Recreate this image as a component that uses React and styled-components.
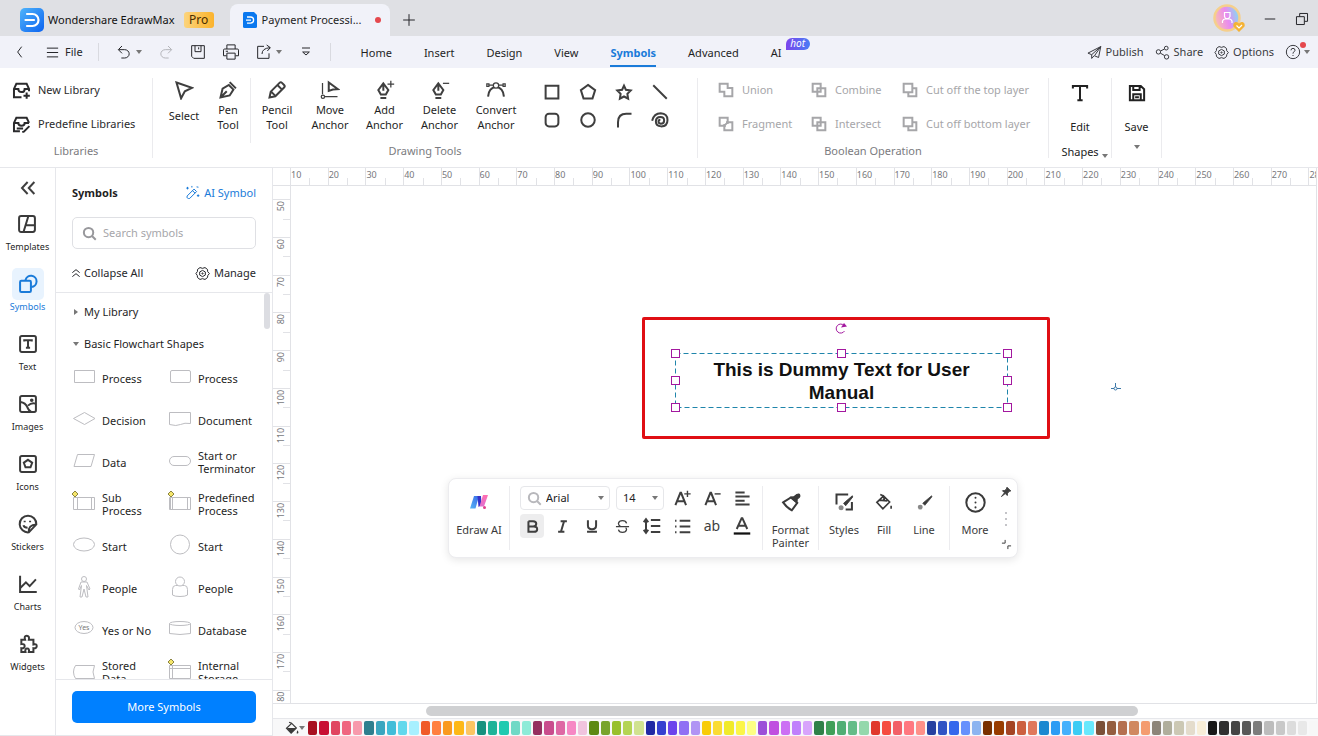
import styled, { createGlobalStyle, css } from "styled-components";

const GlobalStyle = createGlobalStyle`
  * {
    box-sizing: border-box;
  }
  body {
    margin: 0;
    background: #fff;
    color: #1f1f1f;
    font-family: "Noto Sans", "Open Sans", sans-serif;
    font-size: 11px;
    line-height: 16px;
    overflow: hidden;
  }
  button, input, select {
    font: inherit;
    color: inherit;
    margin: 0;
    padding: 0;
    border: 0;
    background: none;
  }
  svg {
    display: block;
    flex: none;
  }
  a {
    color: inherit;
    text-decoration: none;
  }
`;

/* ---------- icons ---------- */

const paths = {
  back: <path d="M14.5 4l-6 8 6 8" />,
  menu: <path d="M3 5h18M3 12h18M3 19h18" />,
  undo: <path d="M9 3L3.500 8.500 9 14M4 8.500h9a6.500 6 0 010 12.500H8" />,
  redo: <path d="M15 3l5.500 5.500L15 14M20 8.500h-9a6.500 6 0 000 12.500h5" />,
  disk: <path d="M2.500 2.500h19v19H5.500l-3-3zM7.500 2.500v9h9v-9M13 5v3" />,
  print: <path d="M6.500 8V2.500h11V8M6 17H2V9.500Q2 8 3.500 8h17Q22 8 22 9.500V17h-4M6.500 13.500h11v8h-11zM5 11h3" />,
  exportIcon: <path d="M12 3.500H2.500v18h17V14M9 15q0-8.500 12-9.500M16 1.500l5.500 4L17 10.500" />,
  overflow: <path d="M6 6h12M7 12l5 4.500 5-4.500z" />,
  plane: <path d="M22 2.500L1.500 13l6 2.500v6l4-4.500 7 3zM22 2.500L7.500 15.500M22 2.500l-9.500 14" />,
  share: (
    <>
      <circle cx="5.500" cy="11" r="3.500" />
      <circle cx="18" cy="5" r="3" />
      <circle cx="18.500" cy="19" r="3.500" />
      <path d="M9 9.500L15 6.500M8.500 13l7 4" />
    </>
  ),
  gear: (
    <>
      <path d="M8 2.500q4 2.500 8 0l4 3q-1 4 3 6.500-3.500 3-3 6.500l-4 3q-4-2.500-8 0l-4-3Q4.500 15 1.500 12q3.500-3 2.500-6.500z" />
      <path d="M12 7l4.500 2.500v5L12 17l-4.500-2.500v-5z" />
      <circle cx="12" cy="12" r="1" />
    </>
  ),
  help: (
    <>
      <circle cx="12" cy="12" r="10" />
      <path d="M9 9.500q0-3 3-3t3 3q0 1.500-3 3.500v1.500M12 16.500V18" />
    </>
  ),
  newLib: <path d="M12 20.500H2.500V10L5.500 3.500h13L21.500 10v3M2.500 10H8q0 4 4 4t4-4h5.500M18.500 14.500v8M14.500 18.500h8" />,
  preLib: <path d="M10 20.500H2.500V10L5.500 3.500h13L21.500 10M2.500 10H8q0 3.500 4 3.500t4-3.500h5.500M6 17h8M13 21.500l2-.5 7-7" />,
  select: <path d="M3 3l18.500 6.500-8.500 4-4.500 8.500z" />,
  pen: <path d="M3 21l2.500-10.500L13 6l5.500 5.500L14 18.500zM3 21l7.500-7.500M14 2.500l7.500 7.500" />,
  pencil: <path d="M3 21l1.500-7L15 3.500q1.500-1.500 3 0l2.500 2.500q1.500 1.500 0 3L10 19.500zM12.500 6l5.500 5.500M5 14l5 5" />,
  moveAnchor: (
    <>
      <path d="M10.500 13V3L21.500 11l-6 .5z" />
      <path strokeWidth="1.500" d="M3 3.500V17M6 20h15" />
      <circle cx="3.500" cy="20" r="2" strokeWidth="1.500" />
    </>
  ),
  addAnchor: (
    <>
      <path d="M10 4L4 12l3 5.500h6l3-5.500zM10 6v7M6.500 21.500h7" />
      <path strokeWidth="1.500" d="M19 1v8M15 5h8" />
    </>
  ),
  delAnchor: (
    <>
      <path d="M10 4L4 12l3 5.500h6l3-5.500zM10 6v7M6.500 21.500h7" />
      <path strokeWidth="1.500" d="M15.500 4H23" />
    </>
  ),
  convert: (
    <>
      <path d="M2.500 20Q3 9.500 12 8q9 1.500 9.500 12" />
      <path strokeWidth="1.500" fill="#fff" d="M1 4.500h2.500v3H1zM20.500 4.500H23v3h-2.500zM4 6h5M15 6h5" />
      <circle cx="12" cy="6.500" r="3.200" fill="#fff" strokeWidth="1.500" />
    </>
  ),
  square: <path d="M3.500 3.500h17v17h-17z" />,
  pentagon: <path d="M12 2.500l9.500 7L18 20.500H6L2.500 9.500z" />,
  star: <path d="M12 3.500l2.500 5.500 6.500 1-4.500 4.500 1 6.500-5.500-3-5.500 3 1-6.500L3 10l6.500-1z" />,
  line: <path d="M3 3l18 18" />,
  rounded: <rect x="3.500" y="3.500" width="17" height="17" rx="4.500" />,
  circle: <circle cx="12" cy="12" r="9" />,
  arc: <path d="M4 22V15Q4 3.500 15 3.500h7" />,
  spiral: <path d="M1.500 13Q4 3 13 3q9 .5 9 9t-8.500 8.500q-7-.5-7-6.500t6-6q5 0 5 4.500t-4.500 4.500q-3-.5-3-3t2.500-2.500" />,
  union: <path d="M2.500 2.500h12v6.500h7v12.500h-12V14.500h-7z" />,
  fragment: <path d="M2.500 2.500h12v7h7v12h-12v-7h-7zM9.500 12v2.500H12M14.500 12V9.500H12M9.500 14.500l5-5" />,
  combine: <path d="M2.500 2.500h12v12h-12zM9.500 9.500h12v12h-12z" />,
  cut: <path d="M2.500 2.500h13v13h-13zM15.500 9.500h6v12h-12v-6" />,
  bigT: <path d="M2.500 6V2.500h19V6M12 2.500v19M8.500 21.500h7" />,
  saveShape: <path d="M2.500 2.500H17l4.500 4.500v14.500h-19zM7 2.500v5.500h8.500V2.500M7 21.500v-8h10v8M9.500 17.500h5" />,
  collapse: <path d="M11.500 4L4 12l7.500 8M20.500 4L13 12l7.500 8" />,
  templates: <path d="M5 2.500h14q2.500 0 2.500 2.500v14q0 2.500-2.500 2.500H5Q2.500 21.500 2.500 19V5Q2.500 2.500 5 2.500zM13.500 3L8 21M11 13.500h10" />,
  symbols: (
    <>
      <rect x="2.500" y="8" width="13" height="13.500" rx="1.500" />
      <path d="M9 7.500A6.700 6.700 0 1116 15.500" />
    </>
  ),
  text: (
    <>
      <rect x="2.500" y="2.500" width="19" height="19" rx="2" />
      <path d="M7.500 9V7.500h9V9M12 7.500v9M9.500 16.500h5" />
    </>
  ),
  images: (
    <>
      <rect x="2.500" y="2.500" width="19" height="19" rx="2" />
      <path d="M3 9.500q6 1 8 6t5 6M12 14q4-4 9-2.500" />
      <circle cx="16.500" cy="7.500" r="1" fill="currentColor" />
    </>
  ),
  icons: (
    <>
      <rect x="2.500" y="2.500" width="19" height="19" rx="2" />
      <path d="M12 7l5 3.500-2 5.500H9l-2-5.500z" />
    </>
  ),
  stickers: (
    <>
      <path d="M13 22a10 10 0 119-9.500zM13 22q-1-9 9-9.500" />
      <path d="M8 8v2M14.500 8v2M6.500 13.500q1 3 5 3" />
    </>
  ),
  charts: <path d="M2.500 2v19.500h20M3 16.500L9.500 10l4.500 4.500L21.500 6.500" />,
  widgets: <path d="M4 7h4.500q-1.500-5 2-5t2.500 5h5.500v5.500q4-1 4 2t-4 2.500v4.500H13q1-4-2-4t-2 4H4v-4.500q4 .5 4-2.500t-4-2.500z" />,
  wand: (
    <path d="M3.500 17.500l11-11 4 4-11 11q-2 .5-3.500-.5t-.5-3.500zM12 9l4 4M18.500 3l3 .5M4 3v4M2 5h4M11 1.500v2.500M21 15v4M19 17h4" />
  ),
  search: <path d="M10.500 3a7.500 7.500 0 100 15 7.500 7.500 0 000-15zM16 16l6 6" />,
  chevUp: <path d="M1 11l11-9 11 9M1 23l11-9 11 9" />,
  aPlus: (
    <>
      <path d="M2 21.500L9 4h1l7 17.500M4.500 16h10" />
      <path strokeWidth="2" d="M19 1v9M14.500 5.500h9" />
    </>
  ),
  aMinus: (
    <>
      <path d="M2 21.500L9 4h1l7 17.500M4.500 16h10" />
      <path strokeWidth="2" d="M15 5.500h8.500" />
    </>
  ),
  align: <path d="M2 3.500h13M2 9h20M2 15h13M2 20.500h20" />,
  bold: <path d="M5.500 3.500H13q5 0 5 4.200T13 12H6M5.500 3.500v17H14q5.500 0 5.500-4.300T14 12" />,
  italic: <path d="M9 3.500h10M5 20.500h10M14.500 3.500l-5 17" />,
  underline: <path d="M5 2v9q0 6.500 7 6.500t7-6.500V2M3.500 22h17" />,
  strike: <path strokeWidth="2" d="M1.500 12h21M18.500 7q-1-4.500-6.500-4.500T5.500 7q0 3 3 4M5.500 17q1 4.500 6.500 4.500t6.500-4.500q0-2-1.500-3" />,
  spacing: <path d="M4 4v16M1 7l3-4 3 4M1 17l3 4 3-4M10.500 4H23M10.500 12H23M10.500 20H23" />,
  bullets: <path d="M8 4h15M8 12h15M8 20h15M1.500 4h2M1.500 12h2M1.500 20h2" />,
  fontColor: (
    <>
      <path d="M5 16L11.500 1.500h1L19 16M7 11.500h10" />
      <path stroke="#111" strokeWidth="3" d="M1 22h22" />
    </>
  ),
  painter: (
    <>
      <path d="M2.500 12.500L12 6.500l7.500 6.500L13 22q-6-3-10.500-9.500z" />
      <path fill="currentColor" strokeWidth="1.500" d="M11.500 6.500l4.500-1L19 3q3-1.500 3.500 1t-3 4L19 13z" />
    </>
  ),
  styles: (
    <>
      <path d="M3 15V3h14M21.500 12v9H14" />
      <path fill="currentColor" strokeWidth="1" d="M22 4.500L11.500 13.500l2.500 3L22.500 6z" />
      <circle cx="8.500" cy="19" r="3" fill="#888" stroke="none" />
    </>
  ),
  fill: <path strokeWidth="2.200" d="M11.500 4l8 8-9 9-8-8.500zM11.500 4L7 2M12 4v6M5.500 9.500l11 1M21.500 17v4" />,
  bucket: (
    <>
      <path strokeWidth="2" d="M11.500 4l8 8-9 9-8-8.500zM11.500 4L7 2" />
      <path fill="currentColor" stroke="none" d="M3 12h16.500l-9 9zM21.500 16q3 5 0 5.500t0-5.500z" />
    </>
  ),
  brush: (
    <>
      <path fill="currentColor" strokeWidth="1" d="M22 2.500L9.500 13l3 3L22.500 4z" />
      <circle cx="6" cy="18.500" r="3.500" fill="#888" stroke="none" />
    </>
  ),
  more: (
    <>
      <circle cx="12" cy="12" r="10.500" />
      <path strokeLinecap="round" d="M12 6.500v.1M12 12v.1M12 17.500v.1" />
    </>
  ),
  pin: <path fill="currentColor" d="M14 2.500l7.500 7.500-3 .5-3.500 4-.5 4.500-4-4L3 21l6-7.500-4-4 4.500-.5L13 6z" />,
  resize: <path d="M2 9h7V2M15 22v-7h7" />,
  plus: <path d="M12 2v20M2 12h20" />,
  minimize: <path d="M3 12h18" />,
  restore: <path d="M2.500 8h13.500v13.500H2.500zM8 8V2.500h13.500V16H16" />,
};

const Svg = styled.svg`
  fill: none;
  stroke: currentColor;
`;

const Icon = ({ name, size = 16, weight = 1 }) => (
  <Svg
    width={size}
    height={size}
    viewBox="0 0 24 24"
    strokeWidth={(weight * 24) / size}
    aria-hidden="true"
  >
    {paths[name]}
  </Svg>
);

const Caret = styled.span`
  width: 0;
  height: 0;
  border: 3px solid transparent;
  border-top: 4px solid #777;
  border-bottom: 0;
`;

const EdrawLogo = ({ size }) => (
  <svg width={size} height={size} viewBox="0 0 24 24" aria-hidden="true">
    <defs>
      <linearGradient id="edraw" x1="0" y1="0" x2="1" y2="1">
        <stop offset="0" stopColor="#4fb4fb" />
        <stop offset="1" stopColor="#0c63f0" />
      </linearGradient>
    </defs>
    <rect width="24" height="24" rx="5" fill="url(#edraw)" />
    <path
      d="M7 6h5.500a6 6 0 010 12H7M5.500 12H14"
      fill="none"
      stroke="#fff"
      strokeWidth="2.200"
      strokeLinecap="round"
    />
  </svg>
);

const DocLogo = () => (
  <svg width="14" height="16" viewBox="0 0 14 16" aria-hidden="true">
    <path d="M1.500 0H11l3 3v11.500q0 1.500-1.500 1.500h-11Q0 16 0 14.500v-13Q0 0 1.500 0z" fill="#0a78ef" />
    <path d="M4 5h3.500a3 3 0 010 6.200H4M3 8.100h5" fill="none" stroke="#fff" strokeWidth="1.300" />
  </svg>
);

const AiLogo = () => (
  <svg width="18" height="14" viewBox="0 0 18 14" aria-hidden="true">
    <defs>
      <linearGradient id="aiBlue" x1="0" y1="1" x2="1" y2="0">
        <stop offset="0" stopColor="#56b6f5" />
        <stop offset="1" stopColor="#3a6ae8" />
      </linearGradient>
      <linearGradient id="aiPink" x1="0" y1="0" x2="0" y2="1">
        <stop offset="0" stopColor="#ff6fb0" />
        <stop offset="1" stopColor="#e070d0" />
      </linearGradient>
    </defs>
    <path d="M4 1h5L5.500 13.500H0z" fill="url(#aiBlue)" />
    <path d="M7.500 1H11l.5 9-3 2z" fill="#3530c8" />
    <path d="M13 0h5l-4 11.500H9.500z" fill="url(#aiPink)" />
    <circle cx="14.500" cy="12.500" r="1.500" fill="#e0408c" />
  </svg>
);

const Avatar = () => (
  <svg width="32" height="30" viewBox="0 0 32 30" aria-hidden="true">
    <defs>
      <linearGradient id="avatar" x1="0" y1=".6" x2="1" y2=".3">
        <stop offset="0" stopColor="#f9c0b0" />
        <stop offset=".5" stopColor="#e98af0" />
        <stop offset="1" stopColor="#7ee0f2" />
      </linearGradient>
    </defs>
    <circle cx="14" cy="14" r="12.500" fill="url(#avatar)" stroke="#f5cf8c" strokeWidth="2.500" />
    <path d="M11.500 8.500h5.500v4l-1.500 2h-3l-1-2zM9.500 19v-2q1-2 2.500-2h4.500q1.500 0 2.500 2v2" fill="none" stroke="#fff" strokeWidth="1.200" />
    <path d="M26 28l-5.500-5.500q-1-3.500 2-4.500 2-.5 3.500 1.500 1.500-2 3.500-1.500 3 1 2 4.500z" fill="#f5b335" />
    <path d="M23.500 21.500l2.500 2.500 3-3" fill="none" stroke="#fff" strokeWidth="1.200" />
  </svg>
);

/* ---------- page ---------- */

const Page = styled.div`
  display: flex;
  flex-direction: column;
  height: 100vh;
`;

const TitleBar = styled.header`
  display: flex;
  align-items: center;
  height: 36px;
  padding: 4px 9px 0 20px;
  background: #dfe0e4;
`;

const AppName = styled.span`
  margin: 0 9px 0 4px;
  color: #111;
`;

const ProBadge = styled.span`
  width: 30px;
  height: 16px;
  border-radius: 3px;
  background: linear-gradient(90deg, #fcd47c, #fbb32c);
  color: #4a2d00;
  font-size: 12px;
  text-align: center;
`;

const DocTab = styled.div`
  display: flex;
  align-items: center;
  align-self: flex-end;
  width: 160px;
  height: 32px;
  margin: 0 12px 0 16px;
  padding: 0 9px 0 13px;
  gap: 5px;
  border-radius: 8px 8px 0 0;
  background: #f1f2f9;
`;

const DocName = styled.span`
  flex: 1;
  white-space: nowrap;
`;

const Dot = styled.span`
  width: 6px;
  height: 6px;
  border-radius: 50%;
  background: #e5484d;
`;

const WindowButtons = styled.div`
  display: flex;
  align-items: center;
  align-self: flex-start;
  gap: 18px;
  margin-left: auto;
`;

const IconButton = styled.button`
  display: flex;
  align-items: center;
  gap: 4px;
  color: ${(props) => (props.$muted ? "#b4b5ba" : "#26272b")};
`;

const MenuBar = styled.nav`
  display: flex;
  align-items: center;
  height: 32px;
  padding: 0 8px 0 12px;
  background: #f1f2f9;
`;

const FileButton = styled(IconButton)`
  gap: 5px;
  margin: 0 15px 0 17px;
`;

const QuickTools = styled.div`
  display: flex;
  align-items: center;
  gap: 16px;
  padding: 0 16px 0 17px;
  border: solid #d9dae0;
  border-width: 0 1px;
`;

const MenuTabs = styled.div`
  display: flex;
  gap: 32px;
  margin-left: 30px;
`;

const MenuTab = styled.a`
  position: relative;
  height: 32px;
  line-height: 33px;
  ${(props) =>
    props.$active &&
    css`
      color: #1a7bd9;
      font-weight: 700;
      border-bottom: 2px solid #1a7bd9;
      height: 31px;
    `}
`;

const HotBadge = styled.span`
  position: absolute;
  left: 15px;
  top: 2px;
  width: 24px;
  height: 12px;
  border-radius: 6px 6px 6px 0;
  background: linear-gradient(90deg, #7b45ec, #4a7df5);
  color: #fff;
  font-size: 10px;
  font-style: italic;
  line-height: 11px;
  text-align: center;
`;

const MenuActions = styled.div`
  display: flex;
  align-items: center;
  gap: 11px;
  margin-left: auto;
  button {
    color: #3a3b40;
  }
`;

const HelpButton = styled(IconButton)`
  position: relative;
  gap: 3px;
`;

const HelpDot = styled(Dot)`
  position: absolute;
  left: 15px;
  top: -2px;
`;

/* ---------- ribbon ---------- */

const Ribbon = styled.section`
  display: flex;
  height: 100px;
  padding-top: 10px;
  border-bottom: 1px solid #e6e7eb;
`;

const Group = styled.div`
  display: flex;
  flex-direction: column;
  width: ${(props) => props.$width}px;
  height: 80px;
  border-right: 1px solid #ebebee;
`;

const GroupBody = styled.div`
  display: flex;
  flex: none;
  height: 65px;
  padding-left: ${(props) => props.$inset || 0}px;
`;

const GroupCaption = styled.div`
  color: #7b7b80;
  text-align: center;
`;

const LibraryList = styled.div`
  display: flex;
  flex-direction: column;
  gap: 14px;
  padding-top: 2px;
`;

const RowButton = styled.button`
  display: flex;
  align-items: center;
  gap: ${(props) => (props.disabled ? 8 : 7)}px;
  height: 20px;
  line-height: 18px;
  white-space: nowrap;
  color: ${(props) => (props.disabled ? "#a6a6a9" : "#2a2a2c")};
`;

const ToolButton = styled.button`
  display: flex;
  flex-direction: column;
  align-items: center;
  width: ${(props) => props.$width}px;
  padding-top: 2px;
  color: #3f3f3f;
  line-height: 15px;
`;

const ToolLabel = styled.span`
  display: flex;
  align-items: center;
  justify-content: center;
  height: ${(props) => (props.$single ? 27 : 30)}px;
  margin-top: 2px;
  color: #1f1f1f;
`;

const Divider = styled.span`
  width: 1px;
  align-self: stretch;
  background: #ebebee;
`;

const ShapeGrid = styled.div`
  display: grid;
  grid-template: repeat(2, 28px) / repeat(4, 36px);
  padding-left: 9px;
  button {
    justify-content: center;
    color: #3f3f3f;
  }
`;

const BooleanGrid = styled.div`
  display: grid;
  grid-template-columns: 93px 91px auto;
  grid-auto-rows: 20px;
  align-content: start;
  gap: 14px 0;
  padding-top: 2px;
`;

const BigButton = styled.button`
  display: flex;
  flex-direction: column;
  align-items: center;
  width: ${(props) => props.$width}px;
  height: 80px;
  padding-top: 6px;
  border-right: 1px solid #ebebee;
  color: #222;
`;

const BigLabel = styled.span`
  display: flex;
  align-items: flex-end;
  gap: 3px;
  line-height: 25px;
  margin-top: ${(props) => (props.$first ? 12 : 0)}px;
  padding-left: ${(props) => (props.$first ? 0 : 9)}px;
  ${Caret} {
    margin: 0 0 6px;
  }
`;

const SaveCaret = styled(Caret)`
  margin-top: 6px;
`;

const Main = styled.main`
  display: flex;
  flex: 1;
  min-height: 0;
`;

/* ---------- left rail ---------- */

const Rail = styled.nav`
  display: flex;
  flex-direction: column;
  align-items: center;
  width: 56px;
  border: solid #e6e7eb;
  border-width: 0 1px 1px 0;
`;

const CollapseButton = styled.button`
  height: 40px;
  color: #3f3f3f;
`;

const RailItem = styled.a`
  display: flex;
  flex-direction: column;
  align-items: center;
  height: 60px;
  color: ${(props) => (props.$active ? "#1a7bd9" : "#1f1f1f")};
  font-size: 9px;
  line-height: 13px;
`;

const RailTile = styled.span`
  display: flex;
  align-items: center;
  justify-content: center;
  width: 32px;
  height: 32px;
  border-radius: 5px;
  color: ${(props) => (props.$active ? "#1a7bd9" : "#3a3a3a")};
  background: ${(props) => (props.$active ? "#e8f3fe" : "none")};
`;

/* ---------- symbol panel ---------- */

const Panel = styled.aside`
  display: flex;
  flex-direction: column;
  width: 217px;
  border: solid #e6e7eb;
  border-width: 0 1px 1px 0;
`;

const PanelHead = styled.div`
  display: flex;
  flex-direction: column;
  gap: 16px;
  height: 125px;
  padding: 17px 16px 0;
  border-bottom: 1px solid #e6e7eb;
`;

const PanelRow = styled.div`
  display: flex;
  align-items: center;
  justify-content: space-between;
`;

const PanelTitle = styled.h2`
  margin: 0;
  font-size: 11px;
`;

const AiLink = styled.a`
  display: flex;
  gap: 4px;
  color: #1a7bd9;
`;

const SearchBox = styled.label`
  display: flex;
  align-items: center;
  gap: 6px;
  height: 32px;
  padding-left: 9px;
  border: 1px solid #dfe0e4;
  border-radius: 5px;
  color: #98989c;
`;

const SearchInput = styled.input`
  min-width: 0;
  flex: 1;
  outline: 0;
  &::placeholder {
    color: #a6a6aa;
  }
`;

const SymbolList = styled.div`
  position: relative;
  flex: 1;
  min-height: 0;
  padding: 5px 0 0 16px;
  overflow: hidden;
`;

const ListThumb = styled.div`
  position: absolute;
  right: 2px;
  top: 0;
  width: 6px;
  height: 36px;
  border-radius: 3px;
  background: #dcdde2;
`;

const LibraryHeader = styled.button`
  display: flex;
  align-items: center;
  gap: 4px;
  height: 28px;
  line-height: 18px;
  margin-bottom: ${(props) => (props.$open ? 0 : 4)}px;
  ${Caret} {
    margin: 0 1px;
    transform: ${(props) => (props.$open ? "none" : "rotate(-90deg)")};
  }
`;

const SymbolGrid = styled.div`
  display: grid;
  grid-template-columns: repeat(2, 96px);
  grid-auto-rows: 42px;
`;

const SymbolItem = styled.button`
  display: flex;
  align-items: center;
  gap: 6px;
  padding-bottom: 2px;
  text-align: left;
  line-height: 13px;
`;

const SymbolSvg = styled.svg`
  fill: #fff;
  stroke: #bdbdc1;
`;

const PanelFoot = styled.div`
  padding: 11px 16px 12px;
  border-top: 1px solid #e6e7eb;
`;

const MoreButton = styled.button`
  width: 100%;
  height: 32px;
  border-radius: 5px;
  background: #0080ff;
  color: #fff;
`;

/* ---------- canvas ---------- */

const Workspace = styled.section`
  display: flex;
  flex-direction: column;
  flex: 1;
  min-width: 0;
`;

const CanvasFrame = styled.div`
  display: grid;
  grid-template: 18px 1fr / 18px 1fr;
  flex: 1;
  min-height: 0;
  margin-right: 1px;
  border: solid #e1e2e6;
  border-width: 0 1px 1px 0;
`;

const Corner = styled.div`
  border: solid #e1e2e6;
  border-width: 0 1px 1px 0;
`;

const TopRuler = styled.div`
  display: flex;
  min-width: 0;
  overflow: hidden;
  border-bottom: 1px solid #e1e2e6;
`;

const SideRuler = styled.div`
  display: flex;
  flex-direction: column;
  min-height: 0;
  border-right: 1px solid #e1e2e6;
`;

const TopCell = styled.div`
  display: flex;
  align-items: flex-end;
  flex: ${(props) => props.$span} 1 0;
  min-width: 0;
  overflow: hidden;
  border-left: ${(props) => (props.$first ? 0 : 1)}px solid #e1e2e6;
`;

const SideCell = styled.div`
  display: flex;
  flex-direction: column;
  align-items: flex-end;
  flex: ${(props) => props.$span} 1 0;
  min-height: 0;
  overflow: hidden;
  border-top: ${(props) => (props.$first ? 0 : 1)}px solid #e1e2e6;
`;

const TopMark = styled.span`
  flex: none;
  width: 50%;
  min-width: 18px;
  height: 17px;
  color: #77787c;
  font-size: 9px;
  line-height: 14px;
`;

const SideMark = styled.span`
  flex: none;
  width: 17px;
  height: 50%;
  min-height: 18px;
  padding: 0 2px 1px 0;
  color: #77787c;
  font-size: 9px;
  line-height: 12px;
  writing-mode: vertical-rl;
  transform: rotate(180deg);
  text-align: right;
`;

const TopHalf = styled.span`
  width: 1px;
  height: 7px;
  background: #e1e2e6;
`;

const SideHalf = styled.span`
  width: 7px;
  height: 1px;
  background: #e1e2e6;
`;

const Canvas = styled.div`
  position: relative;
  min-width: 0;
  min-height: 0;
  overflow: hidden;
`;

const Highlight = styled.div`
  position: absolute;
  left: 351px;
  top: 131px;
  width: 408px;
  height: 122px;
  border: 3px solid #e00f14;
  border-radius: 2px;
`;

const TextShape = styled.div`
  position: absolute;
  left: 384px;
  top: 167px;
  width: 333px;
  height: 55px;
  padding: 5px 20px;
  color: #111;
  font-family: "Liberation Sans", Arial, sans-serif;
  font-size: 19px;
  font-weight: 700;
  line-height: 23px;
  text-align: center;
`;

const SelectionFrame = styled.svg`
  position: absolute;
  left: 379px;
  top: 133px;
  fill: none;
`;

const Handle = styled.span`
  position: absolute;
  left: ${(props) => props.$x}px;
  top: ${(props) => props.$y}px;
  width: 9px;
  height: 9px;
  border: 1px solid #a3189f;
  background: #fff;
`;

const ConnectMark = styled.svg`
  position: absolute;
  left: 820px;
  top: 197px;
`;

const ScrollTrack = styled.div`
  height: 15px;
  padding: 2px 180px 3px 153px;
  border-bottom: 1px solid #e6e7eb;
`;

const ScrollThumb = styled.div`
  height: 10px;
  border-radius: 5px;
  background: #cfd0d2;
`;

const Palette = styled.div`
  display: flex;
  align-items: center;
  height: 17px;
  padding-left: 12px;
  background: #f8f8f9;
`;

const FillPicker = styled.button`
  display: flex;
  align-items: center;
  width: 23px;
  color: #3a3a3a;
`;

const Swatches = styled.div`
  display: flex;
  flex: 1;
  gap: 2px;
`;

const Swatch = styled.button`
  flex: 1 1 0;
  min-width: 0;
  height: 14px;
  border-radius: 2px;
  background: ${(props) => props.$color};
`;

/* ---------- floating toolbar ---------- */

const FloatBar = styled.div`
  position: absolute;
  left: 157px;
  top: 292px;
  display: flex;
  width: 570px;
  height: 80px;
  padding: 7px 4px 7px 0;
  border: 1px solid #ececef;
  border-radius: 8px;
  background: #fff;
  box-shadow: 0 2px 8px rgba(0, 0, 0, 0.1);
`;

const FloatGroup = styled.div`
  display: flex;
  padding: 0 ${(props) => props.$pad || 0}px;
  border-right: 1px solid #ececef;
`;

const FloatTool = styled.button`
  display: flex;
  flex-direction: column;
  align-items: center;
  width: ${(props) => props.$width}px;
  color: #3a3a3a;
  line-height: 13px;
`;

const FloatIcon = styled.span`
  display: flex;
  align-items: center;
  justify-content: center;
  height: 32px;
  margin-bottom: 5px;
`;

const TextTools = styled.div`
  display: flex;
  flex-direction: column;
  gap: 4px;
  width: 252px;
  padding-left: 10px;
`;

const TextRow = styled.div`
  display: flex;
  gap: 6px;
`;

const TextButton = styled.button`
  display: flex;
  align-items: center;
  justify-content: center;
  width: 24px;
  height: 24px;
  border-radius: 4px;
  color: #3f3f3f;
  font-size: 14px;
  background: ${(props) => (props.$active ? "#ededee" : "none")};
`;

const SelectBox = styled.label`
  display: flex;
  align-items: center;
  gap: 4px;
  width: ${(props) => props.$width}px;
  height: 24px;
  padding: 0 5px 0 6px;
  border: 1px solid #e6e7ea;
  border-radius: 4px;
  color: #b8b8bc;
  select {
    flex: 1;
    min-width: 0;
    padding: 0;
    color: #222;
    appearance: none;
    outline: 0;
  }
`;

const FloatSide = styled.div`
  display: flex;
  flex-direction: column;
  align-items: center;
  justify-content: space-between;
  margin-left: auto;
  padding: 0 1px 0 0;
  color: #3f3f3f;
`;

const drawTools = [
  { icon: "pencil", label: ["Pencil", "Tool"], width: 52 },
  { icon: "moveAnchor", label: ["Move", "Anchor"], width: 54 },
  { icon: "addAnchor", label: ["Add", "Anchor"], width: 55 },
  { icon: "delAnchor", label: ["Delete", "Anchor"], width: 55 },
  { icon: "convert", label: ["Convert", "Anchor"], width: 58 },
];

const shapeTools = ["square", "pentagon", "star", "line", "rounded", "circle", "arc", "spiral"];

const booleanTools = [
  ["union", "Union"],
  ["combine", "Combine"],
  ["cut", "Cut off the top layer"],
  ["fragment", "Fragment"],
  ["combine", "Intersect"],
  ["cut", "Cut off bottom layer"],
];

const railItems = [
  ["templates", "Templates"],
  ["symbols", "Symbols"],
  ["text", "Text"],
  ["images", "Images"],
  ["icons", "Icons"],
  ["stickers", "Stickers"],
  ["charts", "Charts"],
  ["widgets", "Widgets"],
];

const diamond = <path d="M3-1l3 3-3 3-3-3z" fill="#f5e66b" stroke="#8c8440" />;

const symbolItems = [
  [["Process"], <path d="M2.500 4.500h20v12h-20z" />],
  [["Process"], <rect x="2.500" y="4.500" width="20" height="12" rx="1.500" />],
  [["Decision"], <path d="M12.500 4.500l10.500 6-10.500 6-11-6z" />],
  [["Document"], <path d="M1.500 4.500h21v11q-6-1-10 1t-11 0z" />],
  [["Data"], <path d="M5.500 4.500h17l-3.500 12h-17z" />],
  [["Start or", "Terminator"], <rect x="1.500" y="6.500" width="21" height="9" rx="4.500" />],
  [["Sub", "Process"], <><path d="M1.500 5.500h21v12h-21zM5.500 5.500v12M19.500 5.500v12" />{diamond}</>],
  [["Predefined", "Process"], <><path d="M1.500 5.500h21v12h-21zM4.500 5.500v12M2.500 6v11M19.500 5.500v12" />{diamond}</>],
  [["Start"], <ellipse cx="12" cy="10.500" rx="10.500" ry="6.500" />],
  [["Start"], <circle cx="12" cy="10.500" r="9.500" />],
  [["People"], <path d="M12 .5a2.500 2.500 0 010 5 2.500 2.500 0 010-5zM9 6h6l3 7-1 1-2.500-4.500L16 21h-2L12 13l-2 8H8l1.500-11.500L7.500 14l-1-1z" />],
  [["People"], <><path d="M4.500 19V13.500q0-4 3-4h9q3 0 3 4V19q-2 1.500-7.500 1.500T4.500 19z" /><circle cx="12" cy="5.500" r="4.500" /></>],
  [["Yes or No"], <><ellipse cx="12" cy="9.500" rx="9" ry="6" /><text x="12" y="12" fontSize="7" fill="#777" stroke="none" textAnchor="middle">Yes</text></>],
  [["Database"], <><path d="M1.500 5.500v10q10.500 2 21 0v-10" /><ellipse cx="12" cy="5.500" rx="10.500" ry="2" /></>],
  [["Stored", "Data"], <path d="M3.500 5.500h19q-3 6.500 0 13h-19q-4-6.500 0-13z" />],
  [["Internal", "Storage"], <><path d="M1.500 5.500h21v13h-21zM4.500 5.500v13M1.500 8.500h21" />{diamond}</>],
];

const colors =
  "a81020 c81034 e04560 ef6680 f79aac 2e7f8e 3aa6bf 42bdd8 62d8ec a8f0ff f05a28 ff7f3f f99a20 fdb818 fcc562 17917e 1eb398 1fcab0 70d9c6 8debd8 953060 c94d8d de68a4 f688c4 f0c4de 5d8a14 78a42c 98c02c b4d454 d0e290 2028a4 3640d0 6c44ec 9070f4 b094f4 f8cc08 fadc34 f0ea2c fbf548 fdff84 9c50d8 c050e0 cc70f4 c080fc d8a4fc 2f8148 3f9f58 50ae74 64bc88 94d8ac e0382c f54c40 f26068 ff7880 ff9088 2640a0 3054c4 3568ec 6690fc 8cb4f0 783000 983c00 a44424 cc6040 e0785c 1c88d0 2c9cf4 44b0fc 3cccf4 68e8fc 7a5038 945e40 b47050 d08860 f49c70 8c8478 b0ae9c ccc8b4 e4dccc f8eed8 181818 303030 444444 585858 7c7c7c bcbcbc c8c8c8 dcdcdc e8e8e8 f7f7f7".split(" ");

const topMarks = Array.from({ length: 28 }, (_, i) => (i + 1) * 10);
const sideMarks = Array.from({ length: 14 }, (_, i) => (i + 5) * 10);

const lines = (label) => label.map((part) => <div key={part}>{part}</div>);

const handles = [
  [380, 163], [546, 163], [712, 163],
  [380, 190], [712, 190],
  [380, 217], [546, 217], [712, 217],
];

const Header = () => (
  <>
    <TitleBar>
      <EdrawLogo size={24} />
      <AppName>Wondershare EdrawMax</AppName>
      <ProBadge>Pro</ProBadge>
      <DocTab>
        <DocLogo />
        <DocName>Payment Processi...</DocName>
        <Dot />
      </DocTab>
      <IconButton aria-label="New tab"><Icon name="plus" size={14} /></IconButton>
      <WindowButtons>
        <IconButton aria-label="Account"><Avatar /></IconButton>
        <IconButton aria-label="Minimize"><Icon name="minimize" size={14} /></IconButton>
        <IconButton aria-label="Restore"><Icon name="restore" size={14} /></IconButton>
      </WindowButtons>
    </TitleBar>
    <MenuBar>
      <IconButton aria-label="Back"><Icon name="back" size={16} /></IconButton>
      <FileButton><Icon name="menu" size={15} />File</FileButton>
      <QuickTools>
        <IconButton aria-label="Undo"><Icon name="undo" size={16} /><Caret /></IconButton>
        <IconButton aria-label="Redo" $muted><Icon name="redo" size={16} /></IconButton>
        <IconButton aria-label="Save"><Icon name="disk" size={16} /></IconButton>
        <IconButton aria-label="Print"><Icon name="print" size={18} /></IconButton>
        <IconButton aria-label="Export"><Icon name="exportIcon" size={16} /><Caret /></IconButton>
        <IconButton aria-label="Customize"><Icon name="overflow" size={16} /></IconButton>
      </QuickTools>
      <MenuTabs>
        <MenuTab href="#home">Home</MenuTab>
        <MenuTab href="#insert">Insert</MenuTab>
        <MenuTab href="#design">Design</MenuTab>
        <MenuTab href="#view">View</MenuTab>
        <MenuTab href="#symbols" $active>Symbols</MenuTab>
        <MenuTab href="#advanced">Advanced</MenuTab>
        <MenuTab href="#ai">AI<HotBadge>hot</HotBadge></MenuTab>
      </MenuTabs>
      <MenuActions>
        <IconButton><Icon name="plane" size={15} />Publish</IconButton>
        <IconButton><Icon name="share" size={15} />Share</IconButton>
        <IconButton><Icon name="gear" size={15} />Options</IconButton>
        <HelpButton aria-label="Help"><Icon name="help" size={16} /><Caret /><HelpDot /></HelpButton>
      </MenuActions>
    </MenuBar>
  </>
);

const SymbolsRibbon = () => (
  <Ribbon>
    <Group $width={153}>
      <GroupBody $inset={12}>
        <LibraryList>
          <RowButton><Icon name="newLib" size={19} weight={2} />New Library</RowButton>
          <RowButton><Icon name="preLib" size={19} weight={2} />Predefine Libraries</RowButton>
        </LibraryList>
      </GroupBody>
      <GroupCaption>Libraries</GroupCaption>
    </Group>
    <Group $width={545}>
      <GroupBody $inset={9}>
        <ToolButton $width={44}>
          <Icon name="select" size={20} weight={2} />
          <ToolLabel $single>Select</ToolLabel>
        </ToolButton>
        <ToolButton $width={44}>
          <Icon name="pen" size={20} weight={2} />
          <ToolLabel><div>{lines(["Pen", "Tool"])}</div></ToolLabel>
        </ToolButton>
        <Divider />
        {drawTools.map((tool) => (
          <ToolButton key={tool.icon} $width={tool.width}>
            <Icon name={tool.icon} size={20} weight={2} />
            <ToolLabel><div>{lines(tool.label)}</div></ToolLabel>
          </ToolButton>
        ))}
        <ShapeGrid>
          {shapeTools.map((name) => (
            <IconButton key={name} aria-label={name}><Icon name={name} size={18} weight={2} /></IconButton>
          ))}
        </ShapeGrid>
      </GroupBody>
      <GroupCaption>Drawing Tools</GroupCaption>
    </Group>
    <Group $width={351}>
      <GroupBody $inset={20}>
        <BooleanGrid>
          {booleanTools.map(([icon, label]) => (
            <RowButton key={label} disabled><Icon name={icon} size={16} weight={2} />{label}</RowButton>
          ))}
        </BooleanGrid>
      </GroupBody>
      <GroupCaption>Boolean Operation</GroupCaption>
    </Group>
    <BigButton $width={63}>
      <Icon name="bigT" size={18} weight={2} />
      <BigLabel $first>Edit</BigLabel>
      <BigLabel>Shapes <Caret /></BigLabel>
    </BigButton>
    <BigButton $width={50}>
      <Icon name="saveShape" size={18} weight={2} />
      <BigLabel $first>Save</BigLabel>
      <SaveCaret />
    </BigButton>
  </Ribbon>
);

const SymbolPanel = () => (
  <Panel>
    <PanelHead>
      <PanelRow>
        <PanelTitle>Symbols</PanelTitle>
        <AiLink href="#ai-symbol"><Icon name="wand" size={15} />AI Symbol</AiLink>
      </PanelRow>
      <SearchBox>
        <Icon name="search" size={15} weight={2} />
        <SearchInput placeholder="Search symbols" aria-label="Search symbols" />
      </SearchBox>
      <PanelRow>
        <IconButton><Icon name="chevUp" size={8} />Collapse All</IconButton>
        <IconButton><Icon name="gear" size={15} />Manage</IconButton>
      </PanelRow>
    </PanelHead>
    <SymbolList>
      <LibraryHeader><Caret />My Library</LibraryHeader>
      <LibraryHeader $open><Caret />Basic Flowchart Shapes</LibraryHeader>
      <SymbolGrid>
        {symbolItems.map(([label, shape], i) => (
          <SymbolItem key={i}>
            <SymbolSvg width="24" height="24" viewBox="0 0 24 24" overflow="visible">{shape}</SymbolSvg>
            <div>{lines(label)}</div>
          </SymbolItem>
        ))}
      </SymbolGrid>
      <ListThumb />
    </SymbolList>
    <PanelFoot>
      <MoreButton>More Symbols</MoreButton>
    </PanelFoot>
  </Panel>
);

const FloatingToolbar = () => (
  <FloatBar>
    <FloatGroup>
      <FloatTool $width={60}>
        <FloatIcon><AiLogo /></FloatIcon>
        Edraw AI
      </FloatTool>
    </FloatGroup>
    <FloatGroup>
      <TextTools>
        <TextRow>
          <SelectBox $width={90}>
            <Icon name="search" size={15} weight={2} />
            <select aria-label="Font"><option>Arial</option></select>
            <Caret />
          </SelectBox>
          <SelectBox $width={48}>
            <select aria-label="Font size"><option>14</option></select>
            <Caret />
          </SelectBox>
          <TextButton aria-label="Increase size"><Icon name="aPlus" size={17} weight={2} /></TextButton>
          <TextButton aria-label="Decrease size"><Icon name="aMinus" size={17} weight={2} /></TextButton>
          <TextButton aria-label="Align"><Icon name="align" size={17} weight={2} /></TextButton>
        </TextRow>
        <TextRow>
          <TextButton aria-label="Bold" $active><Icon name="bold" size={15} weight={2} /></TextButton>
          <TextButton aria-label="Italic"><Icon name="italic" size={15} weight={2} /></TextButton>
          <TextButton aria-label="Underline"><Icon name="underline" size={14} weight={2} /></TextButton>
          <TextButton aria-label="Strikethrough"><Icon name="strike" size={15} weight={2} /></TextButton>
          <TextButton aria-label="Line spacing"><Icon name="spacing" size={18} weight={2} /></TextButton>
          <TextButton aria-label="Bullets"><Icon name="bullets" size={17} weight={2} /></TextButton>
          <TextButton>ab</TextButton>
          <TextButton aria-label="Font color"><Icon name="fontColor" size={18} weight={2} /></TextButton>
        </TextRow>
      </TextTools>
    </FloatGroup>
    <FloatGroup>
      <FloatTool $width={55}>
        <FloatIcon><Icon name="painter" size={20} weight={2} /></FloatIcon>
        Format Painter
      </FloatTool>
    </FloatGroup>
    <FloatGroup $pad={5}>
      <FloatTool $width={40}><FloatIcon><Icon name="styles" size={20} weight={2} /></FloatIcon>Styles</FloatTool>
      <FloatTool $width={40}><FloatIcon><Icon name="fill" size={18} weight={2} /></FloatIcon>Fill</FloatTool>
      <FloatTool $width={40}><FloatIcon><Icon name="brush" size={17} weight={1} /></FloatIcon>Line</FloatTool>
    </FloatGroup>
    <FloatTool $width={51}>
      <FloatIcon><Icon name="more" size={21} weight={2} /></FloatIcon>
      More
    </FloatTool>
    <FloatSide>
      <Icon name="pin" size={12} weight={1} />
      <svg width="2" height="14" fill="#c4c4c8"><path d="M0 0h2v2H0zM0 6h2v2H0zM0 12h2v2H0z" /></svg>
      <Icon name="resize" size={11} weight={1} />
    </FloatSide>
  </FloatBar>
);

const App = () => (
  <Page>
    <GlobalStyle />
    <Header />
    <SymbolsRibbon />
    <Main>
      <Rail>
        <CollapseButton aria-label="Collapse panel"><Icon name="collapse" size={18} weight={2} /></CollapseButton>
        {railItems.map(([icon, label]) => (
          <RailItem key={icon} href={`#${icon}`} $active={icon === "symbols"}>
            <RailTile $active={icon === "symbols"}><Icon name={icon} size={20} weight={2} /></RailTile>
            {label}
          </RailItem>
        ))}
      </Rail>
      <SymbolPanel />
      <Workspace>
        <CanvasFrame>
          <Corner />
          <TopRuler>
            {topMarks.map((mark, i) => (
              <TopCell key={mark} $span={mark === 280 ? 18 : 100} $first={i === 0}>
                <TopMark>{mark}</TopMark>
                <TopHalf />
              </TopCell>
            ))}
          </TopRuler>
          <SideRuler>
            <SideCell $span={36} $first />
            {sideMarks.map((mark) => (
              <SideCell key={mark} $span={mark === 180 ? 33 : 100}>
                <SideMark>{mark}</SideMark>
                <SideHalf />
              </SideCell>
            ))}
          </SideRuler>
          <Canvas>
            <Highlight />
            <TextShape>This is Dummy Text for User Manual</TextShape>
            <SelectionFrame width="343" height="94" viewBox="0 0 343 94">
              <path d="M5.500 34.500h332v54h-332z" stroke="#1f85ab" strokeDasharray="5 3" />
              <path d="M174 6.500a4.500 4.500 0 10.500 5.500" stroke="#a3189f" />
              <path d="M171 8.500l6-1-3-3.500z" fill="#a3189f" />
            </SelectionFrame>
            {handles.map(([x, y]) => (
              <Handle key={`${x}-${y}`} $x={x} $y={y} />
            ))}
            <ConnectMark width="10" height="9" viewBox="0 0 10 9" fill="none" stroke="#3c78a8">
              <path d="M0 5.500h3M6 5.500h4M4.500 0v4" />
              <circle cx="4.500" cy="5.500" r="1.500" />
            </ConnectMark>
            <FloatingToolbar />
          </Canvas>
        </CanvasFrame>
        <ScrollTrack><ScrollThumb /></ScrollTrack>
        <Palette>
          <FillPicker aria-label="Fill color"><Icon name="bucket" size={14} weight={2} /><Caret /></FillPicker>
          <Swatches>
            {colors.map((color, i) => (
              <Swatch key={i} $color={`#${color}`} aria-label={`#${color}`} />
            ))}
          </Swatches>
        </Palette>
      </Workspace>
    </Main>
  </Page>
);

export default App;
